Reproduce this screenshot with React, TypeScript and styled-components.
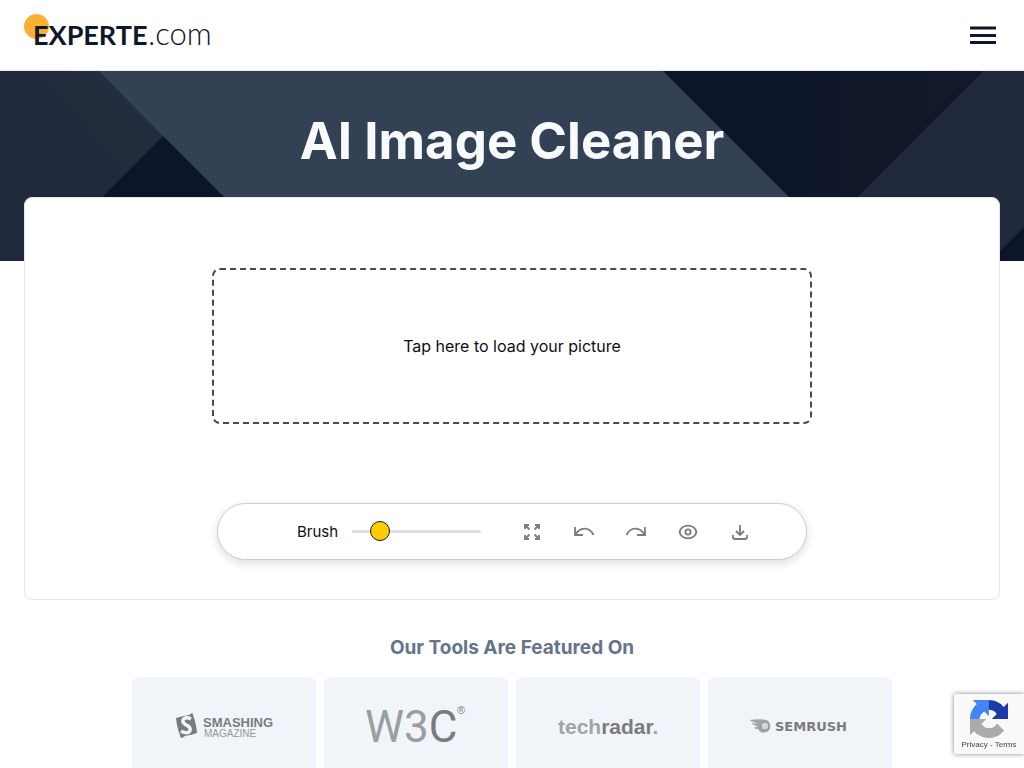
import React, { useState } from "react";
import styled, { createGlobalStyle } from "styled-components";

const GlobalStyle = createGlobalStyle`
  *, *::before, *::after { box-sizing: border-box; }
  body {
    margin: 0;
    background: #fff;
    color: #0f0f0f;
    font-family: Inter, "Liberation Sans", sans-serif;
    font-size: 16px;
    line-height: 24px;
  }
  button, input { font: inherit; color: inherit; }
`;

const Header = styled.header`
  display: flex;
  align-items: center;
  justify-content: space-between;
  height: 71px;
  padding: 0 24px;
  border-bottom: 1px solid #e2e8f0;
`;

const Brand = styled.a`
  display: block;
  height: 48px;
`;

const MenuButton = styled.button`
  display: flex;
  padding: 0 4px;
  border: 0;
  background: none;
  cursor: pointer;
`;

const Hero = styled.section`
  position: relative;
  height: 190px;
  padding-top: 36px;
  background: #334155;
  overflow: hidden;
`;

const HeroArt = styled.svg`
  position: absolute;
  inset: 0;
  width: 100%;
  height: 100%;
`;

const Title = styled.h1`
  position: relative;
  margin: 0;
  color: #f8fafc;
  font-size: 51px;
  line-height: 68px;
  font-weight: 700;
  text-align: center;
`;

const ToolCard = styled.main`
  position: relative;
  display: flex;
  flex-direction: column;
  align-items: center;
  gap: 79px;
  margin: -64px 24px 0;
  padding: 70px 24px 39px;
  background: #fff;
  border: 1px solid #e2e8f0;
  border-radius: 8px;
`;

const DropZone = styled.button`
  width: 100%;
  max-width: 600px;
  height: 156px;
  border: 2px dashed #4a4a4a;
  border-radius: 8px;
  background: #fff;
  cursor: pointer;
`;

const Toolbar = styled.div`
  display: flex;
  align-items: center;
  width: 100%;
  max-width: 590px;
  height: 57px;
  padding: 0 46px 0 79px;
  border: 1px solid #cfcfcf;
  border-radius: 29px;
  background: #fff;
  box-shadow: 0 3px 10px rgba(0, 0, 0, 0.14);
`;

const BrushLabel = styled.label`
  display: flex;
  align-items: center;
  gap: 14px;
  font-size: 15px;
`;

const BrushSlider = styled.input`
  appearance: none;
  width: 129px;
  height: 20px;
  margin: 0;
  background: transparent;
  cursor: pointer;

  &::-webkit-slider-runnable-track {
    height: 3px;
    border-radius: 2px;
    background: #dedede;
  }

  &::-webkit-slider-thumb {
    appearance: none;
    width: 20px;
    height: 20px;
    margin-top: -9px;
    border: 1px solid #1a1a1a;
    border-radius: 50%;
    background: #ffcc00;
  }
`;

const Actions = styled.div`
  display: flex;
  gap: 12px;
  margin-left: auto;
`;

const IconButton = styled.button`
  display: flex;
  align-items: center;
  justify-content: center;
  width: 40px;
  height: 40px;
  padding: 0;
  border: 0;
  background: none;
  color: #7c7c7c;
  cursor: pointer;
`;

const Featured = styled.section`
  padding: 34px 24px 0;
`;

const FeaturedTitle = styled.h2`
  margin: 0 0 15px;
  color: #64748b;
  font-size: 19px;
  line-height: 28px;
  font-weight: 700;
  text-align: center;
`;

const LogoGrid = styled.div`
  display: grid;
  grid-template-columns: repeat(4, 1fr);
  gap: 8px;
  max-width: 760px;
  margin: 0 auto;
`;

const LogoTile = styled.div`
  display: flex;
  align-items: center;
  justify-content: center;
  height: 98px;
  border-radius: 8px;
  background: #f1f5f9;
`;

const CaptchaBadge = styled.aside`
  position: fixed;
  right: 0;
  bottom: 14px;
  display: flex;
  flex-direction: column;
  align-items: center;
  gap: 2px;
  width: 70px;
  height: 60px;
  padding-top: 6px;
  border-radius: 2px 0 0 2px;
  background: #f9f9f9;
  box-shadow: 0 0 5px gray;
`;

const CaptchaLinks = styled.div`
  color: #444;
  font-family: "Liberation Sans", Arial, sans-serif;
  font-size: 8px;
  line-height: 10px;
  white-space: nowrap;

  a {
    color: inherit;
    text-decoration: none;
  }
`;

function BrandLogo() {
  return (
    <svg width="200" height="48" viewBox="0 0 200 48" role="img" aria-label="EXPERTE.com">
      <circle cx="12.5" cy="15.5" r="12.5" fill="#fbb034" />
      <text x="9" y="34" fill="#0f172a" fontFamily="Lato, sans-serif" fontSize="27" fontWeight="700">EXPERTE</text>
      <text x="124" y="34" fill="#0f172a" fontFamily="Lato, sans-serif" fontSize="31" fontWeight="300">.com</text>
    </svg>
  );
}

function HeroShapes() {
  return (
    <HeroArt viewBox="0 0 1024 190" preserveAspectRatio="none" aria-hidden="true">
      <defs>
        <linearGradient id="leftFace" x1="0" y1="1" x2="1" y2="0">
          <stop offset="0.5" stopColor="#1f293b" />
          <stop offset="1" stopColor="#242f3e" />
        </linearGradient>
        <linearGradient id="darkFace" x1="0" y1="0" x2="1" y2="0">
          <stop offset="0.4" stopColor="#0d1628" />
          <stop offset="1" stopColor="#13192b" />
        </linearGradient>
      </defs>
      <path d="M0 0H99L163 65L38 190H0Z" fill="url(#leftFace)" />
      <path d="M163 65L288 190H38Z" fill="#0d1529" />
      <path d="M663 0H984L794 190H853Z" fill="url(#darkFace)" />
      <path d="M984 0H1024V156L990 190H794Z" fill="#1f293b" />
      <path d="M1024 156V190H990Z" fill="#0d1529" />
    </HeroArt>
  );
}

const strokeProps = {
  width: 24,
  height: 24,
  viewBox: "0 0 24 24",
  fill: "none",
  stroke: "currentColor",
  strokeWidth: 1.8,
  "aria-hidden": true,
};

const actions = [
  {
    label: "Fit to screen",
    icon: (
      <svg {...strokeProps}>
        <path d="M5 9V5H9M5 5L9.500 9.500M15 5H19V9M19 5L14.500 9.500M5 15V19H9M5 19L9.500 14.500M19 15V19H15M19 19L14.500 14.500" />
      </svg>
    ),
  },
  {
    label: "Undo",
    icon: (
      <svg {...strokeProps}>
        <path d="M3 7V15H11M3 15C8 7 17 6 21.500 15" />
      </svg>
    ),
  },
  {
    label: "Redo",
    icon: (
      <svg {...strokeProps}>
        <path d="M21 7V15H13M21 15C16 7 7 6 2.500 15" />
      </svg>
    ),
  },
  {
    label: "Show original",
    icon: (
      <svg {...strokeProps}>
        <path d="M4 12C5.500 3.500 18.500 3.500 20 12C18.500 20.500 5.500 20.500 4 12Z" transform="translate(-0.600 0) scale(1.050 1)" />
        <circle cx="12" cy="12" r="2.600" />
      </svg>
    ),
  },
  {
    label: "Download",
    icon: (
      <svg {...strokeProps}>
        <path d="M12 5V15M8 11L12 15L16 11M5 15V17Q5 19 7 19H17Q19 19 19 17V15" />
      </svg>
    ),
  },
];

function SmashingLogo() {
  return (
    <svg width="100" height="28" viewBox="0 0 100 28" role="img" aria-label="Smashing Magazine">
      <path d="M2 6Q8 4 15 3L18 1Q19 1 19 3Q22 10 23 21Q18 23 11 24L8 26Q6 26 6 23Q3 16 2 6Z" fill="#797c7f" />
      <path d="M17 7Q11 4 9 8Q8 11 14 14Q18 17 15 20Q12 22 7 19" fill="none" stroke="#f1f5f9" strokeWidth="3.500" />
      <text x="29" y="15" fill="#797c7f" fontFamily="Liberation Sans, sans-serif" fontSize="13" fontWeight="700">SMASHING</text>
      <text x="30" y="25" fill="#94979a" fontFamily="Liberation Sans, sans-serif" fontSize="10">MAGAZINE</text>
    </svg>
  );
}

function W3CLogo() {
  return (
    <svg width="104" height="60" viewBox="0 0 104 60" role="img" aria-label="W3C">
      <text x="1" y="46" fontFamily="Roboto, sans-serif" fontSize="44">
        <tspan fill="#9b9ea0">W3</tspan>
        <tspan fill="#797c7f">C</tspan>
      </text>
      <text x="93" y="18" fill="#797c7f" fontFamily="Liberation Sans, sans-serif" fontSize="11">®</text>
    </svg>
  );
}

function TechRadarLogo() {
  return (
    <svg width="102" height="28" viewBox="0 0 102 28" role="img" aria-label="techradar">
      <text x="1" y="22" fontFamily="Liberation Sans, sans-serif" fontSize="21" fontWeight="700">
        <tspan fill="#a2a5a8">tech</tspan>
        <tspan fill="#797c7f">radar</tspan>
        <tspan fill="#a2a5a8">.</tspan>
      </text>
    </svg>
  );
}

function SemrushLogo() {
  return (
    <svg width="102" height="20" viewBox="0 0 102 20" role="img" aria-label="Semrush">
      <path d="M1 4Q8 3 15 3.500A6.500 6.500 0 1 1 9 13Q4 13 6 11Q9 11 8 10Q3 9 3 7Q7 8 8 7Q2 6 1 4Z" fill="#a2a5a8" />
      <circle cx="16" cy="10" r="4" fill="#d3d7da" stroke="#939699" />
      <text x="26" y="15" fill="#797c7f" fontFamily="DejaVu Sans, sans-serif" fontSize="13" fontWeight="700">SEMRUSH</text>
    </svg>
  );
}

function CaptchaIcon() {
  return (
    <svg width="38" height="38" viewBox="0 0 64 64" aria-hidden="true">
      <path fill="#1c3aa9" d="M64 31.955l-.033-1.37V4.687l-7.16 7.16C50.948 4.674 42.033.093 32.05.093c-10.4 0-19.622 4.96-25.458 12.64l11.736 11.86a15.55 15.55 0 0 1 4.754-5.334c2.05-1.6 4.952-2.906 8.968-2.906.485 0 .86.057 1.135.163 4.976.393 9.288 3.14 11.828 7.124l-8.307 8.307L64 31.953" />
      <path fill="#4285f4" d="M31.862.094l-1.37.033H4.594l7.16 7.16C4.58 13.147 0 22.06 0 32.046c0 10.4 4.96 19.622 12.64 25.458L24.5 45.768a15.55 15.55 0 0 1-5.334-4.754c-1.6-2.05-2.906-4.952-2.906-8.968 0-.485.057-.86.163-1.135.393-4.976 3.14-9.288 7.124-11.828l8.307 8.307L31.86.095" />
      <path fill="#ababab" d="M.001 32.045l.033 1.37v25.898l7.16-7.16c5.86 7.173 14.774 11.754 24.76 11.754 10.4 0 19.622-4.96 25.458-12.64l-11.736-11.86a15.55 15.55 0 0 1-4.754 5.334c-2.05 1.6-4.952 2.906-8.968 2.906-.485 0-.86-.057-1.135-.163-4.976-.393-9.288-3.14-11.828-7.124l8.307-8.307c-10.522.04-22.4.066-27.295-.005" />
    </svg>
  );
}

export default function App() {
  const [brush, setBrush] = useState(16);

  return (
    <>
      <GlobalStyle />
      <Header>
        <Brand href="#">
          <BrandLogo />
        </Brand>
        <MenuButton type="button" aria-label="Menu">
          <svg width="26" height="20" viewBox="0 0 26 20" aria-hidden="true">
            <path d="M0 3H26M0 10.500H26M0 17.500H26" stroke="#0f172a" strokeWidth="3.200" />
          </svg>
        </MenuButton>
      </Header>
      <Hero>
        <HeroShapes />
        <Title>AI Image Cleaner</Title>
      </Hero>
      <ToolCard>
        <DropZone type="button">Tap here to load your picture</DropZone>
        <Toolbar role="toolbar" aria-label="Editing tools">
          <BrushLabel>
            Brush
            <BrushSlider
              type="range"
              min={0}
              max={100}
              value={brush}
              onChange={(e) => setBrush(Number(e.target.value))}
            />
          </BrushLabel>
          <Actions>
            {actions.map(({ label, icon }) => (
              <IconButton key={label} type="button" aria-label={label}>
                {icon}
              </IconButton>
            ))}
          </Actions>
        </Toolbar>
      </ToolCard>
      <Featured>
        <FeaturedTitle>Our Tools Are Featured On</FeaturedTitle>
        <LogoGrid>
          <LogoTile><SmashingLogo /></LogoTile>
          <LogoTile><W3CLogo /></LogoTile>
          <LogoTile><TechRadarLogo /></LogoTile>
          <LogoTile><SemrushLogo /></LogoTile>
        </LogoGrid>
      </Featured>
      <CaptchaBadge>
        <CaptchaIcon />
        <CaptchaLinks>
          <a href="#privacy">Privacy</a> - <a href="#terms">Terms</a>
        </CaptchaLinks>
      </CaptchaBadge>
    </>
  );
}
